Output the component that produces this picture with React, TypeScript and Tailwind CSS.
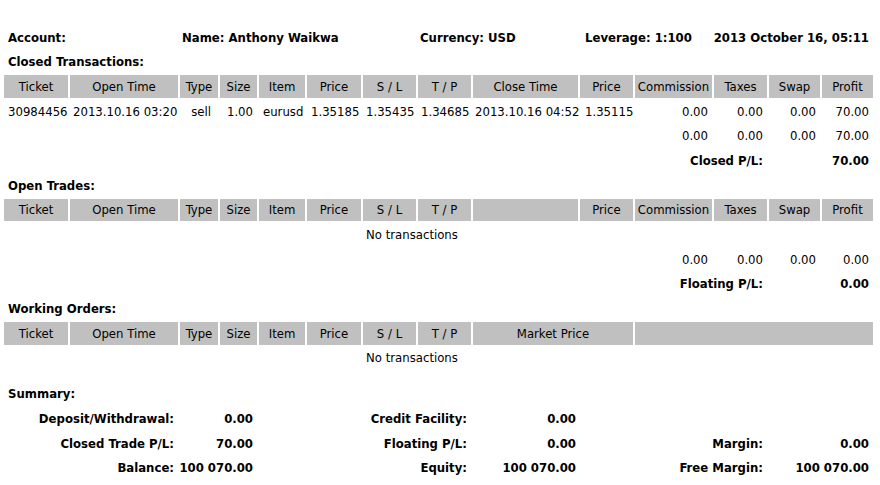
const grid =
  "grid grid-cols-[64px_108px_38px_37px_46px_54px_53px_53px_105px_53px_77px_53px_51px_51px] gap-x-[2px] h-[24.67px] py-[1px]";

const closedHead = ["Ticket", "Open Time", "Type", "Size", "Item", "Price", "S / L", "T / P", "Close Time", "Price", "Commission", "Taxes", "Swap", "Profit"];
const openHead = ["Ticket", "Open Time", "Type", "Size", "Item", "Price", "S / L", "T / P", "", "Price", "Commission", "Taxes", "Swap", "Profit"];
const orderHead = ["Ticket", "Open Time", "Type", "Size", "Item", "Price", "S / L", "T / P"];

function HeadCell({ children, span }: { children?: React.ReactNode; span?: string }) {
  return (
    <div className={`bg-[#c0c0c0] flex items-center justify-center whitespace-nowrap ${span ?? ""}`}>
      {children}
    </div>
  );
}

function Label({ children }: { children: React.ReactNode }) {
  return (
    <div className={grid}>
      <div className="col-span-6 flex items-center pl-[4px] font-bold">{children}</div>
    </div>
  );
}

function Totals({ profit }: { profit: string }) {
  return (
    <div className={grid}>
      <div className="col-start-11 flex items-center justify-end pr-[4px]">0.00</div>
      <div className="flex items-center justify-end pr-[4px]">0.00</div>
      <div className="flex items-center justify-end pr-[4px]">0.00</div>
      <div className="flex items-center justify-end pr-[4px]">{profit}</div>
    </div>
  );
}

function PLRow({ label, value }: { label: string; value: string }) {
  return (
    <div className={grid}>
      <div className="col-start-10 col-span-3 flex items-center justify-end pr-[4px] font-bold">{label}</div>
      <div className="col-start-14 flex items-center justify-end pr-[4px] font-bold">{value}</div>
    </div>
  );
}

function NoTrans() {
  return (
    <div className={grid}>
      <div className="col-span-13 flex items-center justify-center">No transactions</div>
    </div>
  );
}

function SumRow({ a, b, c, d, e, f }: { a: string; b: string; c: string; d: string; e?: string; f?: string }) {
  const cell = "flex items-center justify-end font-bold whitespace-nowrap";
  return (
    <div className={grid}>
      <div className={`col-span-2 pr-[4px] ${cell}`}>{a}</div>
      <div className={`col-span-2 pr-[4px] ${cell}`}>{b}</div>
      <div className={`col-span-4 pr-[4px] ${cell}`}>{c}</div>
      <div className={`pr-[2px] ${cell}`}>{d}</div>
      {e && <div className={`col-span-3 pr-[4px] ${cell}`}>{e}</div>}
      {f && <div className={`col-span-2 pr-[4px] ${cell}`}>{f}</div>}
    </div>
  );
}

export default function App() {
  return (
    <div className="w-[880px] h-[485px] bg-white text-black text-[13px] leading-none font-['DejaVu_Sans_Condensed','DejaVu_Sans',sans-serif] font-stretch-condensed pl-[4px] pt-[25px] overflow-hidden">
      {/* Account header */}
      <div className={`${grid} font-bold`}>
        <div className="col-span-2 flex items-center pl-[4px]">Account:</div>
        <div className="col-span-5 flex items-center pl-[2px] whitespace-nowrap">Name: Anthony Waikwa</div>
        <div className="col-span-2 flex items-center pl-[2px] whitespace-nowrap">Currency: USD</div>
        <div className="col-span-2 flex items-center pl-[5px] whitespace-nowrap">Leverage: 1:100</div>
        <div className="col-span-3 flex items-center justify-end pr-[4px] whitespace-nowrap">2013 October 16, 05:11</div>
      </div>

      {/* Closed transactions */}
      <Label>Closed Transactions:</Label>
      <div className={grid}>
        {closedHead.map((h, i) => (
          <HeadCell key={i}>{h}</HeadCell>
        ))}
      </div>
      <div className={`${grid} whitespace-nowrap`}>
        <div className="flex items-center pl-[4px]">30984456</div>
        <div className="flex items-center pl-[3px]">2013.10.16 03:20</div>
        <div className="flex items-center justify-end pr-[7px]">sell</div>
        <div className="flex items-center justify-end pr-[4px]">1.00</div>
        <div className="flex items-center pl-[4px]">eurusd</div>
        <div className="flex items-center pl-[4px]">1.35185</div>
        <div className="flex items-center pl-[3px]">1.35435</div>
        <div className="flex items-center pl-[3px]">1.34685</div>
        <div className="flex items-center pl-[2px]">2013.10.16 04:52</div>
        <div className="flex items-center pl-[5px]">1.35115</div>
        <div className="flex items-center justify-end pr-[4px]">0.00</div>
        <div className="flex items-center justify-end pr-[4px]">0.00</div>
        <div className="flex items-center justify-end pr-[4px]">0.00</div>
        <div className="flex items-center justify-end pr-[4px]">70.00</div>
      </div>
      <Totals profit="70.00" />
      <PLRow label="Closed P/L:" value="70.00" />

      {/* Open trades */}
      <Label>Open Trades:</Label>
      <div className={grid}>
        {openHead.map((h, i) => (
          <HeadCell key={i}>{h}</HeadCell>
        ))}
      </div>
      <NoTrans />
      <Totals profit="0.00" />
      <PLRow label="Floating P/L:" value="0.00" />

      {/* Working orders */}
      <Label>Working Orders:</Label>
      <div className={grid}>
        {orderHead.map((h, i) => (
          <HeadCell key={i}>{h}</HeadCell>
        ))}
        <HeadCell span="col-span-2">Market Price</HeadCell>
        <HeadCell span="col-span-4" />
      </div>
      <NoTrans />
      <div className="h-[11.33px]" />

      {/* Summary */}
      <Label>Summary:</Label>
      <SumRow a="Deposit/Withdrawal:" b="0.00" c="Credit Facility:" d="0.00" />
      <SumRow a="Closed Trade P/L:" b="70.00" c="Floating P/L:" d="0.00" e="Margin:" f="0.00" />
      <SumRow a="Balance:" b="100 070.00" c="Equity:" d="100 070.00" e="Free Margin:" f="100 070.00" />
    </div>
  );
}
